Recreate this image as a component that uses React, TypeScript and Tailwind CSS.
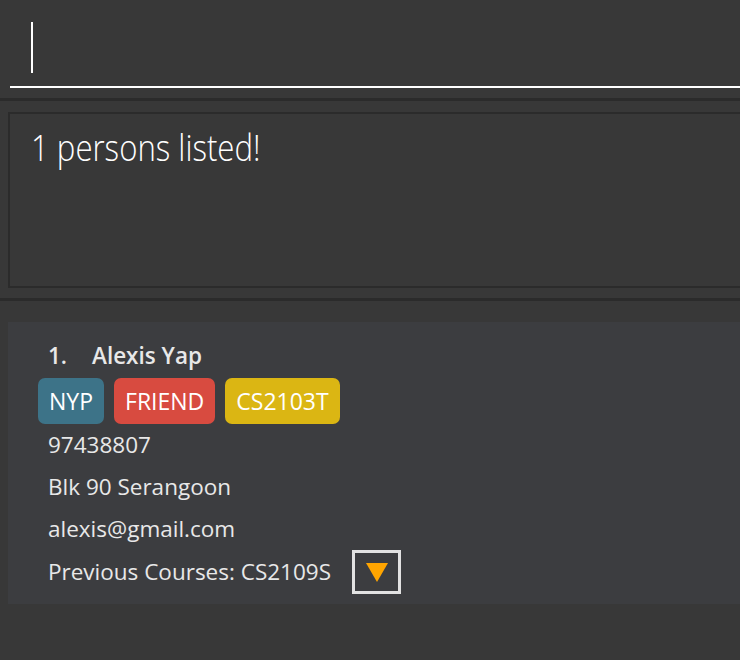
import React from 'react';

const tags = [
  { label: 'NYP', color: 'bg-[#3d7388]' },
  { label: 'FRIEND', color: 'bg-[#d84b40]' },
  { label: 'CS2103T', color: 'bg-[#dbb613]' },
];

function PersonCard() {
  return (
    <div className="ml-[8px] bg-[#3c3d40] h-[282px] pl-[30px] pt-[16px] text-[#e8e8e8] text-[22.5px] font-['Open_Sans',sans-serif]">
      <div className="flex items-center h-[36px] pl-[10px] font-semibold">
        <span className="w-[44px]">1.</span>
        <span>Alexis Yap</span>
      </div>
      <div className="flex gap-[10px] mt-[4px]">
        {tags.map((t) => (
          <span
            key={t.label}
            className={`${t.color} h-[46px] px-[11px] rounded-[7px] flex items-center text-[23px] text-white`}
          >
            {t.label}
          </span>
        ))}
      </div>
      <div className="pl-[10px]">
        <div className="h-[42px] flex items-center">97438807</div>
        <div className="h-[42px] flex items-center">Blk 90 Serangoon</div>
        <div className="h-[42px] flex items-center">alexis@gmail.com</div>
        <div className="h-[44px] flex items-center gap-[21px]">
          <span>Previous Courses: CS2109S</span>
          <button className="w-[49px] h-[44px] border-[3px] border-[#e2e2e2] flex items-center justify-center">
            <svg width="24" height="22" viewBox="0 0 24 22">
              <polygon points="1,2 23,2 12,21" fill="#ffa500" />
            </svg>
          </button>
        </div>
      </div>
    </div>
  );
}

export default function App() {
  return (
    <div className="w-[740px] h-[660px] bg-[#383838] overflow-hidden">
      <div className="h-[98px] pl-[10px]">
        <div className="h-[88px] border-b-2 border-white pl-[21px] pt-[22px]">
          <div className="w-[1.5px] h-[51px] bg-white" />
        </div>
      </div>
      <div className="h-[3px] bg-[#2b2b2b]" />
      <div className="h-[197px] pt-[11px] pl-[8px]">
        <div className="h-[176px] border-2 border-r-0 border-[#2b2b2b] pl-[21px] pt-[14px]">
          <span className="inline-block origin-left scale-x-[0.865] text-white text-[36px] font-light leading-[40px] font-['Open_Sans',sans-serif] whitespace-nowrap">
            1 persons listed!
          </span>
        </div>
      </div>
      <div className="h-[3px] bg-[#2b2b2b]" />
      <div className="h-[21px]" />
      <PersonCard />
    </div>
  );
}
